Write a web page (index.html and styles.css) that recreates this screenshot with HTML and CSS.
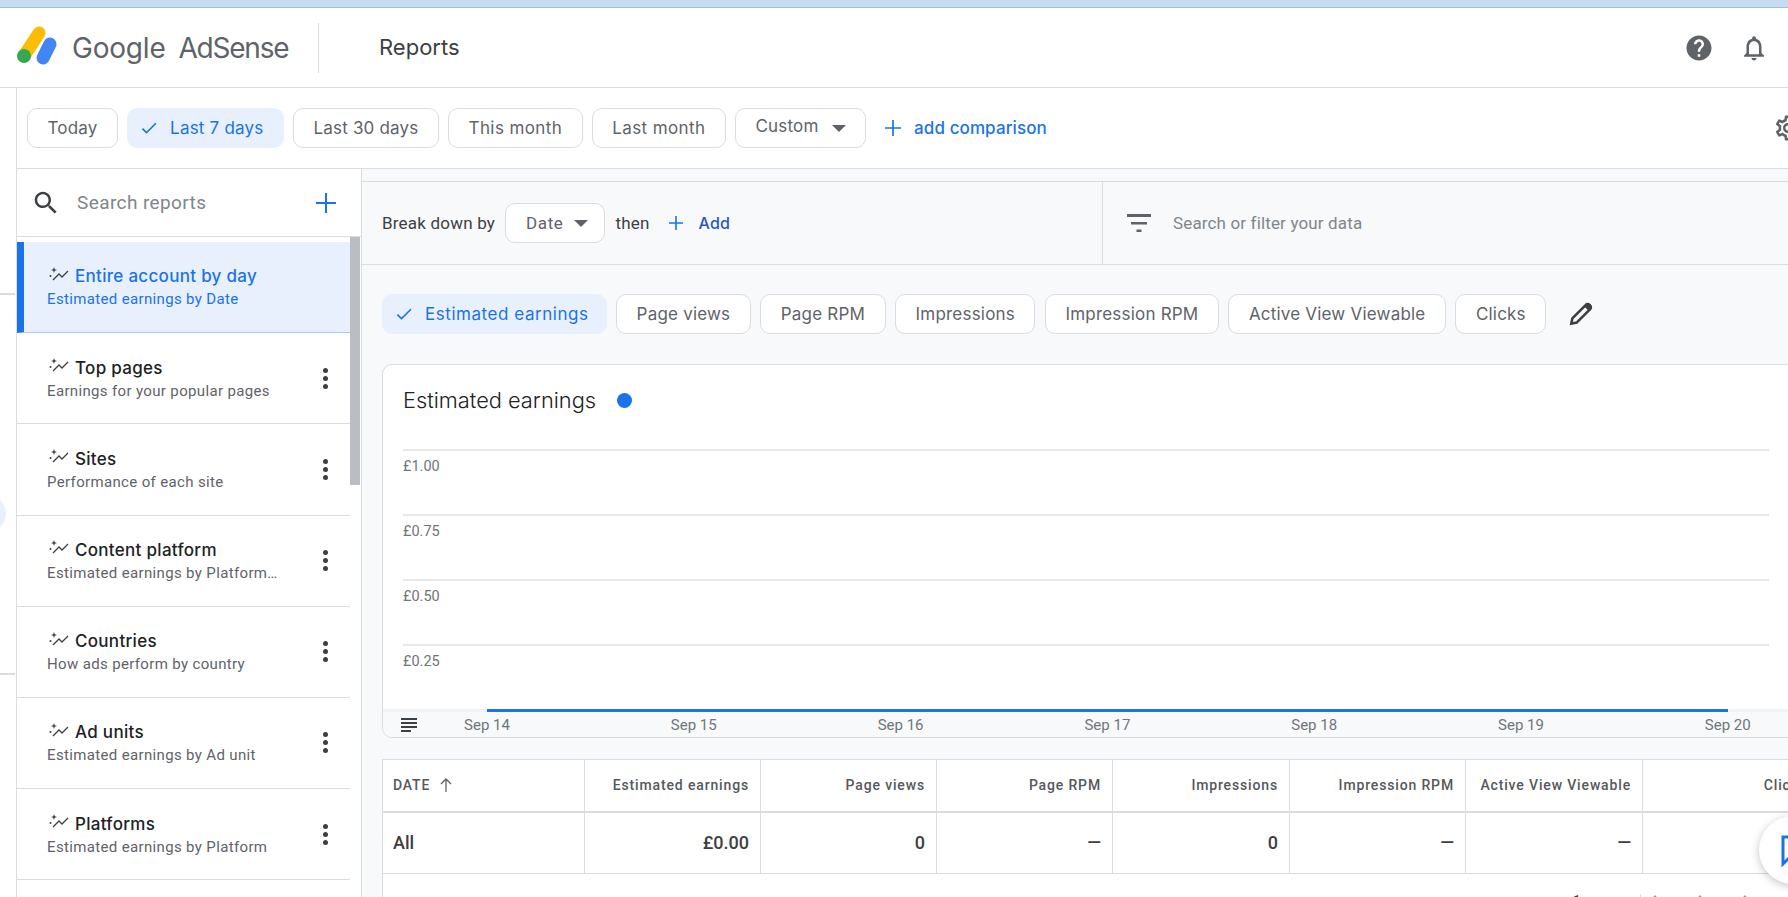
FILE: index.html
```html
<!DOCTYPE html>
<html lang="en">
<head>
    <meta charset="UTF-8">
    <title>Reports - Google AdSense</title>
    <link rel="stylesheet" href="styles.css">
</head>
<body>
    <div class="browser-strip"></div>

    <header class="header">
        <svg class="logo" width="60" height="50" viewBox="0 0 60 50">
            <line x1="39" y1="10" x2="24" y2="33" stroke="#fbbc04" stroke-width="13" stroke-linecap="round"/>
            <line x1="50" y1="21" x2="43" y2="35" stroke="#4285f4" stroke-width="13" stroke-linecap="round"/>
            <circle cx="24" cy="33" r="7" fill="#34a853"/>
        </svg>
        <span class="brand"><span class="brand-google">Google</span> <span class="brand-product">AdSense</span></span>
        <div class="header-divider"></div>
        <span class="page-title">Reports</span>
        <div class="header-icons">
            <svg width="30" height="30" viewBox="0 0 24 24" fill="#5f6368"><path d="M12 2C6.48 2 2 6.48 2 12s4.48 10 10 10 10-4.48 10-10S17.52 2 12 2zm1 17h-2v-2h2v2zm2.07-7.75l-.9.92C13.45 12.9 13 13.5 13 15h-2v-.5c0-1.1.45-2.1 1.17-2.83l1.24-1.26c.37-.36.59-.86.59-1.41 0-1.1-.9-2-2-2s-2 .9-2 2H8c0-2.21 1.79-4 4-4s4 1.79 4 4c0 .88-.36 1.68-.93 2.25z"/></svg>
            <svg width="30" height="30" viewBox="0 0 24 24" fill="#5f6368"><path d="M12 22c1.1 0 2-.9 2-2h-4c0 1.1.89 2 2 2zm6-6v-5c0-3.07-1.64-5.64-4.5-6.32V4c0-.83-.67-1.5-1.5-1.5s-1.5.67-1.5 1.5v.68C7.63 5.36 6 7.92 6 11v5l-2 2v1h16v-1l-2-2zm-2 1H8v-6c0-2.48 1.51-4.5 4-4.5s4 2.02 4 4.5v6z"/></svg>
        </div>
    </header>

    <div class="layout">
        <div class="rail">
            <div class="rail-line rail-line-top"></div>
            <div class="rail-dot"></div>
            <div class="rail-line rail-line-bottom"></div>
        </div>

        <div class="page">
            <div class="filterbar">
                <button class="chip">Today</button>
                <button class="chip chip-on">
                    <svg class="check" width="20" height="20" viewBox="0 0 24 24" fill="#1a73e8"><path d="M9 16.17L4.83 12l-1.42 1.41L9 19 21 7l-1.41-1.41z"/></svg>
                    Last 7 days
                </button>
                <button class="chip">Last 30 days</button>
                <button class="chip chip-month">This month</button>
                <button class="chip chip-month">Last month</button>
                <button class="chip chip-custom"><span class="chip-custom-text">Custom</span><span class="caret"></span></button>
                <svg class="plus-comparison" width="18" height="18" viewBox="0 0 18 18"><path d="M9 1v16M1 9h16" stroke="#1a73e8" stroke-width="1.7"/></svg>
                <span class="add-comparison">add comparison</span>
                <svg class="gear" width="30" height="30" viewBox="0 0 24 24" fill="#5f6368"><path d="M19.43 12.98c.04-.32.07-.64.07-.98 0-.34-.03-.66-.07-.98l2.11-1.65c.19-.15.24-.42.12-.64l-2-3.46c-.09-.16-.26-.25-.44-.25-.06 0-.12.01-.17.03l-2.49 1c-.52-.4-1.08-.73-1.69-.98l-.38-2.65C14.46 2.18 14.25 2 14 2h-4c-.25 0-.46.18-.49.42l-.38 2.65c-.61.25-1.17.59-1.69.98l-2.49-1c-.06-.02-.12-.03-.18-.03-.17 0-.34.09-.43.25l-2 3.46c-.13.22-.07.49.12.64l2.11 1.65c-.04.32-.07.65-.07.98 0 .33.03.66.07.98l-2.11 1.65c-.19.15-.24.42-.12.64l2 3.46c.09.16.26.25.44.25.06 0 .12-.01.17-.03l2.49-1c.52.4 1.08.73 1.69.98l.38 2.65c.03.24.24.42.49.42h4c.25 0 .46-.18.49-.42l.38-2.65c.61-.25 1.17-.59 1.69-.98l2.49 1c.06.02.12.03.18.03.17 0 .34-.09.43-.25l2-3.46c.12-.22.07-.49-.12-.64l-2.11-1.65zm-1.98-1.71c.04.31.05.52.05.73 0 .21-.02.43-.05.73l-.14 1.13.89.7 1.08.84-.7 1.21-1.27-.51-1.04-.42-.9.68c-.43.32-.84.56-1.25.73l-1.06.43-.16 1.13-.2 1.35h-1.4l-.19-1.35-.16-1.13-1.06-.43c-.43-.18-.83-.41-1.23-.71l-.91-.7-1.06.43-1.27.51-.7-1.21 1.08-.84.89-.7-.14-1.13c-.03-.31-.05-.54-.05-.74s.02-.43.05-.73l.14-1.13-.89-.7-1.08-.84.7-1.21 1.27.51 1.04.42.9-.68c.43-.32.84-.56 1.25-.73l1.06-.43.16-1.13.2-1.35h1.39l.19 1.35.16 1.13 1.06.43c.43.18.83.41 1.23.71l.91.7 1.06-.43 1.27-.51.7 1.21-1.07.85-.89.7.14 1.13zM12 8c-2.21 0-4 1.79-4 4s1.79 4 4 4 4-1.79 4-4-1.79-4-4-4zm0 6c-1.1 0-2-.9-2-2s.9-2 2-2 2 .9 2 2-.9 2-2 2z"/></svg>
            </div>

            <div class="content">
                <aside class="sidebar">
                    <div class="search-reports">
                        <svg width="30" height="30" viewBox="0 0 24 24" fill="#3c4043"><path d="M15.5 14h-.79l-.28-.27C15.41 12.59 16 11.11 16 9.5 16 5.91 13.09 3 9.5 3S3 5.91 3 9.5 5.91 16 9.5 16c1.61 0 3.09-.59 4.23-1.57l.27.28v.79l5 4.99L20.49 19l-4.99-5zm-6 0C7.01 14 5 11.99 5 9.5S7.01 5 9.5 5 14 7.01 14 9.5 11.99 14 9.5 14z"/></svg>
                        <span class="search-text">Search reports</span>
                        <svg class="search-plus" width="22" height="22" viewBox="0 0 22 22"><path d="M11 1v20M1 11h20" stroke="#1a73e8" stroke-width="2"/></svg>
                    </div>
                    <div class="report-scroll">
                        <div class="report-list">
                            <div class="report report-on">
                                <div class="report-text">
                                    <div class="report-title"><svg class="spark" width="20" height="16" viewBox="0 0 20 16"><use href="#spark-icon"/></svg>Entire account by day</div>
                                    <div class="report-sub">Estimated earnings by Date</div>
                                </div>
                            </div>
                            <div class="report">
                                <div class="report-text">
                                    <div class="report-title"><svg class="spark" width="20" height="16" viewBox="0 0 20 16"><use href="#spark-icon"/></svg>Top pages</div>
                                    <div class="report-sub">Earnings for your popular pages</div>
                                </div>
                                <div class="dots"><i></i><i></i><i></i></div>
                            </div>
                            <div class="report">
                                <div class="report-text">
                                    <div class="report-title"><svg class="spark" width="20" height="16" viewBox="0 0 20 16"><use href="#spark-icon"/></svg>Sites</div>
                                    <div class="report-sub">Performance of each site</div>
                                </div>
                                <div class="dots"><i></i><i></i><i></i></div>
                            </div>
                            <div class="report">
                                <div class="report-text">
                                    <div class="report-title"><svg class="spark" width="20" height="16" viewBox="0 0 20 16"><use href="#spark-icon"/></svg>Content platform</div>
                                    <div class="report-sub">Estimated earnings by Platform type</div>
                                </div>
                                <div class="dots"><i></i><i></i><i></i></div>
                            </div>
                            <div class="report">
                                <div class="report-text">
                                    <div class="report-title"><svg class="spark" width="20" height="16" viewBox="0 0 20 16"><use href="#spark-icon"/></svg>Countries</div>
                                    <div class="report-sub">How ads perform by country</div>
                                </div>
                                <div class="dots"><i></i><i></i><i></i></div>
                            </div>
                            <div class="report">
                                <div class="report-text">
                                    <div class="report-title"><svg class="spark" width="20" height="16" viewBox="0 0 20 16"><use href="#spark-icon"/></svg>Ad units</div>
                                    <div class="report-sub">Estimated earnings by Ad unit</div>
                                </div>
                                <div class="dots"><i></i><i></i><i></i></div>
                            </div>
                            <div class="report">
                                <div class="report-text">
                                    <div class="report-title"><svg class="spark" width="20" height="16" viewBox="0 0 20 16"><use href="#spark-icon"/></svg>Platforms</div>
                                    <div class="report-sub">Estimated earnings by Platform</div>
                                </div>
                                <div class="dots"><i></i><i></i><i></i></div>
                            </div>
                        </div>
                        <div class="scrollbar"><div class="scrollbar-thumb"></div></div>
                    </div>
                </aside>

                <main class="main">
                    <div class="main-band"></div>
                    <div class="break-row">
                        <div class="breakdown">
                            <span>Break down by</span>
                            <button class="select-date">Date<span class="caret"></span></button>
                            <span>then</span>
                            <svg class="break-plus" width="16" height="16" viewBox="0 0 16 16"><path d="M8 1v14M1 8h14" stroke="#1a73e8" stroke-width="1.6"/></svg>
                            <span class="break-add">Add</span>
                        </div>
                        <div class="data-search">
                            <svg width="24" height="24" viewBox="0 0 24 24"><path d="M0 3h24v3H0zM4 11h16v2.500H4zM9.500 18.500h5V21h-5z" fill="#5f6368"/></svg>
                            <span>Search or filter your data</span>
                        </div>
                    </div>

                    <div class="metric-row">
                        <button class="chip chip-on chip-wide">
                            <svg class="check" width="20" height="20" viewBox="0 0 24 24" fill="#1a73e8"><path d="M9 16.17L4.83 12l-1.42 1.41L9 19 21 7l-1.41-1.41z"/></svg>
                            Estimated earnings
                        </button>
                        <button class="chip">Page views</button>
                        <button class="chip">Page RPM</button>
                        <button class="chip">Impressions</button>
                        <button class="chip">Impression RPM</button>
                        <button class="chip">Active View Viewable</button>
                        <button class="chip">Clicks</button>
                        <svg class="pencil" width="28" height="28" viewBox="0 0 26 26"><path d="M4 22l1-5L17.500 4.500a2 2 0 0 1 3 0l1 1a2 2 0 0 1 0 3L9 21z" fill="none" stroke="#3c4043" stroke-width="2.400"/><path d="M16 6l4 4 2-2a2.500 2.500 0 0 0-4-4z" fill="#3c4043"/></svg>
                    </div>

                    <section class="chart-card">
                        <div class="chart-title">Estimated earnings<span class="legend-dot"></span></div>
                        <div class="plot">
                            <div class="grid-row">£1.00</div>
                            <div class="grid-row">£0.75</div>
                            <div class="grid-row">£0.50</div>
                            <div class="grid-row">£0.25</div>
                        </div>
                        <div class="baseline"><div class="baseline-blue"></div></div>
                        <div class="axis">
                            <svg class="axis-icon" width="20" height="18" viewBox="0 0 20 18"><path d="M2 2h16v2H2zM2 6h16v2H2zM2 10h16v2H2zM2 14h10v2H2z" fill="#3c4043"/></svg>
                            <span>Sep 14</span><span>Sep 15</span><span>Sep 16</span><span>Sep 17</span><span>Sep 18</span><span>Sep 19</span><span>Sep 20</span>
                        </div>
                    </section>

                    <section class="table-card">
                        <div class="tbl-row tbl-head">
                            <div class="tbl-cell tbl-first">DATE
                                <svg class="sort-arrow" width="16" height="16" viewBox="0 0 16 16"><path d="M8 15V2M3 7l5-5 5 5" fill="none" stroke="#5f6368" stroke-width="1.300"/></svg>
                            </div>
                            <div class="tbl-cell">Estimated earnings</div>
                            <div class="tbl-cell">Page views</div>
                            <div class="tbl-cell">Page RPM</div>
                            <div class="tbl-cell">Impressions</div>
                            <div class="tbl-cell">Impression RPM</div>
                            <div class="tbl-cell">Active View Viewable</div>
                            <div class="tbl-cell">Clicks</div>
                        </div>
                        <div class="tbl-row tbl-total">
                            <div class="tbl-cell tbl-first">All</div>
                            <div class="tbl-cell">£0.00</div>
                            <div class="tbl-cell">0</div>
                            <div class="tbl-cell">—</div>
                            <div class="tbl-cell">0</div>
                            <div class="tbl-cell">—</div>
                            <div class="tbl-cell">—</div>
                            <div class="tbl-cell">0</div>
                        </div>
                        <div class="pager">
                            <span class="pager-range">1</span>
                            <span class="pager-bar"></span>
                            <span class="pager-chev pager-chev-first"></span>
                            <span class="pager-chev"></span>
                            <span class="pager-chev"></span>
                        </div>
                    </section>
                </main>
            </div>
        </div>
    </div>

    <div class="feedback">
        <svg width="34" height="34" viewBox="0 0 34 34"><path d="M2 3h28v20H9l-7 7z" fill="none" stroke="#1a73e8" stroke-width="3"/></svg>
    </div>

    <svg width="0" height="0" class="svg-defs">
        <symbol id="spark-icon" viewBox="0 0 20 16">
            <path d="M4 14l6-6 3 3 6-6" fill="none" stroke="#3c4043" stroke-width="1.300"/>
            <path d="M5 1l.8 2.200L8 4l-2.200.8L5 7l-.8-2.200L2 4l2.200-.8z" fill="#3c4043"/>
            <circle cx="1.500" cy="10" r="1" fill="#3c4043"/>
        </symbol>
    </svg>
</body>
</html>
```

FILE: styles.css
```css
* {
    box-sizing: border-box;
}
html, body {
    height: 100%;
}
body {
    margin: 0;
    font-family: Roboto, "Liberation Sans", sans-serif;
    color: #3c4043;
    background: white;
    overflow: hidden;
}
button {
    font-family: inherit;
}
.svg-defs {
    position: absolute;
}

.browser-strip {
    height: 8px;
    background-color: #c9daf4;
    border-bottom: 1px solid #a8bbdb;
}

/* top header */
.header {
    display: flex;
    align-items: center;
    height: 80px;
    border-bottom: 1px solid #dadce0;
    padding-right: 19px;
}
.logo {
    flex: none;
    margin-right: 12px;
}
.brand {
    font-family: Inter, Roboto, sans-serif;
    font-size: 28px;
    word-spacing: 5px;
    color: #5f6368;
    width: 246px;
    white-space: nowrap;
}
.brand-google {
    letter-spacing: -0.2px;
}
.brand-product {
    letter-spacing: -1.2px;
}
.header-divider {
    width: 1px;
    height: 50px;
    background-color: #dadce0;
}
.page-title {
    margin-left: 60px;
    padding-bottom: 2px;
    font-family: Inter, Roboto, sans-serif;
    font-size: 22px;
    color: #3c4043;
}
.header-icons {
    margin-left: auto;
    display: flex;
    gap: 25px;
}

.layout {
    display: flex;
    height: calc(100vh - 88px);
}
.rail {
    position: relative;
    flex: none;
    width: 17px;
    border-right: 1px solid #dadce0;
    overflow: hidden;
}
.rail-line {
    position: absolute;
    left: 0;
    width: 15px;
    height: 2px;
    background-color: #dadce0;
}
.rail-line-top {
    top: 205px;
}
.rail-line-bottom {
    top: 585px;
}
.rail-dot {
    position: absolute;
    left: -31px;
    top: 407px;
    width: 37px;
    height: 37px;
    border-radius: 50%;
    background-color: #e8f0fe;
}
.page {
    flex: 1;
    min-width: 0;
    display: flex;
    flex-direction: column;
}

/* date range chips */
.filterbar {
    flex: none;
    height: 81px;
    display: flex;
    align-items: center;
    gap: 9px;
    padding-left: 10px;
    border-bottom: 1px solid #dadce0;
}
.chip {
    flex: none;
    display: flex;
    align-items: center;
    height: 40px;
    padding: 0 19.5px;
    background: white;
    border: 1px solid #dadce0;
    border-radius: 10px;
    font-family: Inter, Roboto, sans-serif;
    font-size: 17px;
    letter-spacing: 0.2px;
    color: #5f6368;
}
.chip-on {
    padding-left: 11px;
    background-color: #e8f0fe;
    border-color: #e8f0fe;
    color: #1a73e8;
}
.chip-month {
    letter-spacing: 0.4px;
}
.chip-wide {
    padding-right: 17px;
    letter-spacing: 0.55px;
}
.check {
    margin-right: 11px;
}
.chip-custom-text {
    position: relative;
    top: -2px;
}
.caret {
    display: inline-block;
    width: 0;
    height: 0;
    margin-left: 13px;
    border-left: 7px solid transparent;
    border-right: 7px solid transparent;
    border-top: 7px solid #5f6368;
}
.plus-comparison {
    margin-left: 9px;
}
.add-comparison {
    margin-left: 3px;
    font-family: Inter, Roboto, sans-serif;
    font-size: 17px;
    font-weight: 500;
    letter-spacing: 0.1px;
    color: #1a73e8;
}
.gear {
    margin-left: auto;
    margin-right: -15px;
    flex: none;
}

.content {
    flex: 1;
    min-height: 0;
    display: flex;
}

/* reports list */
.sidebar {
    flex: none;
    width: 345px;
    display: flex;
    flex-direction: column;
    border-right: 1px solid #dadce0;
}
.search-reports {
    flex: none;
    display: flex;
    align-items: center;
    height: 68px;
    padding: 0 13px 0 14px;
    border-bottom: 1px solid #dadce0;
}
.search-text {
    margin-left: 16px;
    font-size: 19px;
    letter-spacing: 0.4px;
    color: #80868b;
}
.search-plus {
    margin-left: auto;
    margin-right: 11px;
}
.report-scroll {
    flex: 1;
    min-height: 0;
    display: flex;
}
.report-list {
    flex: 1;
    padding-top: 5px;
}
.report {
    display: flex;
    height: 91.2px;
    padding: 23.4px 0 0 30px;
    border-bottom: 1px solid #dadce0;
}
.report-on {
    padding-left: 23px;
    background-color: #e8f0fe;
    border-left: 7px solid #1a73e8;
    border-bottom-color: #a8c7fa;
}
.report-text {
    width: 233px;
}
.report-title {
    display: flex;
    align-items: center;
    height: 22px;
    font-family: Inter, Roboto, sans-serif;
    font-size: 17px;
    font-weight: 450;
    letter-spacing: 0.3px;
    color: #202124;
    white-space: nowrap;
}
.spark {
    flex: none;
    margin: -5px 6px 0 2px;
}
.report-sub {
    margin-top: 2px;
    font-size: 15px;
    line-height: 20px;
    letter-spacing: 0.35px;
    color: #5f6368;
    white-space: nowrap;
    overflow: hidden;
    text-overflow: ellipsis;
}
.report-on .report-title,
.report-on .report-sub {
    color: #1a73e8;
}
.dots {
    margin: 11px 0 0 43px;
    display: flex;
    flex-direction: column;
    gap: 3px;
}
.dots i {
    width: 5px;
    height: 5px;
    border-radius: 50%;
    background-color: #3c4043;
}
.scrollbar {
    flex: none;
    width: 11px;
    padding-right: 1px;
}
.scrollbar-thumb {
    height: 248px;
    background-color: #babdc2;
}

/* main column */
.main {
    flex: 1;
    min-width: 0;
    padding-left: 20px;
    background-color: #f8f9fa;
}
.main-band {
    height: 13px;
    margin-left: -20px;
    border-bottom: 1px solid #dadce0;
}
.break-row {
    display: flex;
    height: 83px;
    margin-left: -20px;
    border-bottom: 1px solid #dadce0;
}
.breakdown {
    flex: none;
    width: 741px;
    display: flex;
    align-items: center;
    padding-left: 20px;
    border-right: 1px solid #dadce0;
    font-size: 17px;
    letter-spacing: 0.2px;
}
.select-date {
    display: flex;
    align-items: center;
    height: 40px;
    margin: 0 10px;
    padding: 0 16px 0 20px;
    background: white;
    border: 1px solid #dadce0;
    border-radius: 10px;
    font-size: 17px;
    letter-spacing: 0.6px;
    color: #5f6368;
}
.select-date .caret {
    margin-left: 11px;
}
.break-plus {
    margin-left: 18px;
}
.break-add {
    margin-left: 15px;
    font-family: Inter, Roboto, sans-serif;
    font-size: 16px;
    font-weight: 500;
    color: #2b55c7;
}
.data-search {
    display: flex;
    align-items: center;
    padding-left: 24px;
    font-size: 17px;
    letter-spacing: 0.15px;
    color: #80868b;
}
.data-search span {
    margin-left: 22px;
}
.metric-row {
    display: flex;
    align-items: center;
    gap: 9.5px;
    margin-top: 29px;
}
.pencil {
    margin-left: 11px;
    flex: none;
}

/* chart */
.chart-card {
    width: 1450px;
    height: 374px;
    margin-top: 30px;
    background: white;
    border: 1px solid #dadce0;
    border-radius: 10px;
    overflow: hidden;
}
.chart-title {
    display: flex;
    align-items: center;
    height: 84px;
    padding: 0 0 14px 20px;
    font-family: Inter, Roboto, sans-serif;
    font-size: 21.8px;
    font-weight: 300;
    color: #202124;
}
.legend-dot {
    width: 15px;
    height: 15px;
    margin-left: 21px;
    border-radius: 50%;
    background-color: #1a73e8;
}
.plot {
    height: 260px;
    margin-left: 20px;
    width: 1366px;
}
.grid-row {
    height: 65px;
    padding-top: 7px;
    border-top: 2px solid #e8e8e8;
    font-size: 14.5px;
    color: #70757a;
}
.baseline {
    height: 3px;
    padding-left: 104px;
    background-color: #f1f3f4;
}
.baseline-blue {
    width: 1241px;
    height: 3px;
    background-color: #1a73e8;
}
.axis {
    display: flex;
    align-items: center;
    height: 26px;
    padding: 0 0 1px 16px;
    gap: 146.8px;
    background-color: #f8f9fa;
    font-size: 15px;
    color: #70757a;
}
.axis span {
    width: 60px;
    text-align: center;
}
.axis-icon {
    margin-right: -108.8px;
    flex: none;
}

/* table */
.table-card {
    width: 1450px;
    margin-top: 21px;
    padding-bottom: 40px;
    background: white;
    border: 1px solid #dadce0;
    border-right: none;
}
.tbl-row {
    display: grid;
    grid-template-columns: 202px 176px 176px 176px 177px 176px 177px 176px;
}
.tbl-head {
    height: 53px;
    border-bottom: 2px solid #dadce0;
    font-size: 14px;
    font-weight: 500;
    letter-spacing: 0.85px;
    color: #55585c;
}
.tbl-total {
    height: 61px;
    border-bottom: 1px solid #dadce0;
    font-size: 18px;
    font-weight: 500;
}
.tbl-cell {
    display: flex;
    align-items: center;
    justify-content: flex-end;
    padding: 0 11px 2px 0;
    border-right: 1px solid #dadce0;
}
.tbl-first {
    justify-content: flex-start;
    padding-left: 10px;
}
.sort-arrow {
    margin-left: 8px;
}
.pager {
    display: flex;
    align-items: flex-start;
    margin-top: 20px;
    padding-left: 1190px;
    font-size: 14px;
    line-height: 14px;
    color: #3c4043;
}
.pager-range {
    width: 67px;
}
.pager-bar {
    width: 1px;
    height: 22px;
    background-color: #dadce0;
}
.pager-chev {
    width: 8px;
    height: 8px;
    margin: 3px 0 0 37px;
    border-left: 2px solid #9aa0a6;
    border-top: 2px solid #9aa0a6;
    transform: rotate(45deg);
}
.pager-chev-first {
    margin-left: 10px;
}

.feedback {
    position: fixed;
    left: 1759px;
    top: 816px;
    width: 68px;
    height: 68px;
    padding: 18px 0 0 22px;
    border-radius: 50%;
    background: white;
    box-shadow: 0 2px 8px rgba(60, 64, 67, 0.3);
}
```
